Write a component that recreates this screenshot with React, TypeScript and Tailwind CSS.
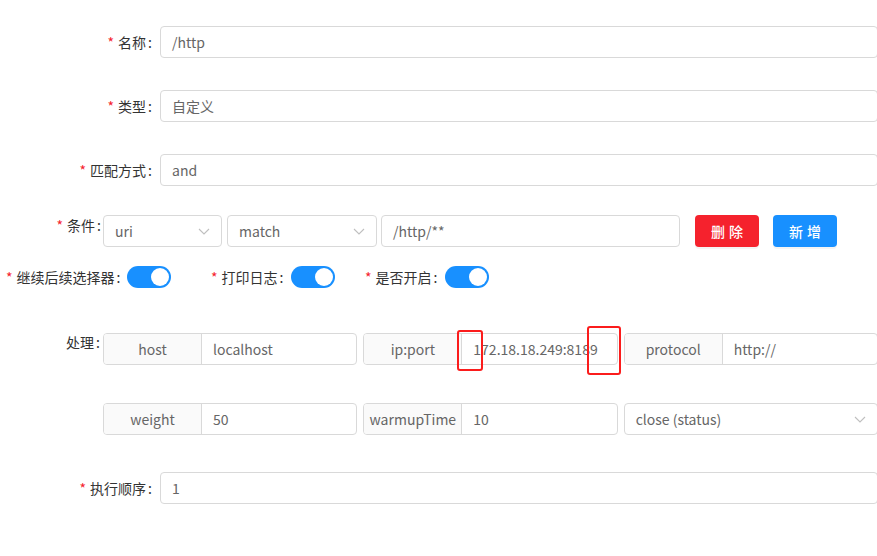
import React from 'react';

const FONT = { fontFamily: '"Noto Sans CJK SC", "Noto Sans", sans-serif' };

const Chevron = () => (
  <svg width="12" height="7" viewBox="0 0 12 7" fill="none" className="shrink-0">
    <path d="M1 1l5 5 5-5" stroke="#bfbfbf" strokeWidth="1.1" />
  </svg>
);

const Req = () => <span className="text-[#f5222d] mr-[4px]">*</span>;

const Label = ({ text, required = true, className = '' }: { text: string; required?: boolean; className?: string }) => (
  <div className={`shrink-0 text-right text-[14px] text-[#333] whitespace-nowrap ${className}`}>
    {required && <Req />}
    {text}
    <span className="ml-[2px]">:</span>
  </div>
);

const Input = ({ value, className = '' }: { value: string; className?: string }) => (
  <div className={`h-[32px] border border-[#d9d9d9] rounded-[4px] bg-white flex items-center px-[11px] text-[14px] text-[#666] ${className}`}>
    {value}
  </div>
);

const Select = ({ value, className = '' }: { value: string; className?: string }) => (
  <div className={`h-[32px] border border-[#d9d9d9] rounded-[4px] bg-white flex items-center justify-between pl-[11px] pr-[11px] text-[14px] text-[#666] ${className}`}>
    <span>{value}</span>
    <Chevron />
  </div>
);

const Group = ({ addon, value }: { addon: string; value: string }) => (
  <div className="h-[32px] flex border border-[#d9d9d9] rounded-[4px] bg-white text-[14px] text-[#666] overflow-hidden">
    <div className="w-[98px] shrink-0 bg-[#fafafa] border-r border-[#d9d9d9] flex items-center justify-center">{addon}</div>
    <div className="flex-1 flex items-center px-[11px] whitespace-nowrap overflow-hidden">{value}</div>
  </div>
);

const Switch = () => (
  <div className="w-[44px] h-[22px] rounded-full bg-[#1890ff] relative shrink-0">
    <div className="absolute right-[2px] top-[2px] w-[18px] h-[18px] rounded-full bg-white" />
  </div>
);

export default function App() {
  return (
    <div className="w-[877px] h-[556px] overflow-hidden bg-white relative" style={FONT}>
      <div className="w-[878px] flex flex-col">
        <div className="flex items-center mt-[26px]">
          <Label text="名称" className="w-[160px] pr-[8px]" />
          <Input value="/http" className="flex-1" />
        </div>
        <div className="flex items-center mt-[32px]">
          <Label text="类型" className="w-[160px] pr-[8px]" />
          <Input value="自定义" className="flex-1" />
        </div>
        <div className="flex items-center mt-[32px]">
          <Label text="匹配方式" className="w-[160px] pr-[8px]" />
          <Input value="and" className="flex-1" />
        </div>

        <div className="flex items-start mt-[29px]">
          <Label text="条件" className="w-[103px] pr-[2px] leading-[22px] -mt-[1px]" />
          <Select value="uri" className="w-[119px]" />
          <Select value="match" className="w-[150px] ml-[5px]" />
          <Input value="/http/**" className="w-[299px] ml-[4px]" />
          <button className="ml-[15px] w-[64px] h-[32px] rounded-[4px] bg-[#f5222d] text-white text-[14px] font-medium tracking-[4px] pl-[4px] shadow-[0_2px_0_rgba(0,0,0,0.045)]">删除</button>
          <button className="ml-[14px] w-[64px] h-[32px] rounded-[4px] bg-[#1890ff] text-white text-[14px] font-medium tracking-[4px] pl-[4px] shadow-[0_2px_0_rgba(0,0,0,0.045)]">新增</button>
        </div>

        <div className="flex items-center mt-[19px] h-[22px] text-[14px] text-[#333]">
          <div className="w-[127px] shrink-0 pl-[6px] whitespace-nowrap"><Req />继续后续选择器<span className="ml-[2px]">:</span></div>
          <Switch />
          <div className="w-[80px] shrink-0 ml-[40px] whitespace-nowrap"><Req />打印日志<span className="ml-[2px]">:</span></div>
          <Switch />
          <div className="w-[80px] shrink-0 ml-[30px] whitespace-nowrap"><Req />是否开启<span className="ml-[2px]">:</span></div>
          <Switch />
        </div>

        <div className="flex items-start mt-[45px]">
          <Label text="处理" required={false} className="w-[103px] pr-[3px] leading-[18px]" />
          <div className="flex-1 grid grid-cols-3 gap-x-[6px] gap-y-[38px]">
            <Group addon="host" value="localhost" />
            <Group addon="ip:port" value="172.18.18.249:8189" />
            <Group addon="protocol" value="http://" />
            <Group addon="weight" value="50" />
            <Group addon="warmupTime" value="10" />
            <Select value="close (status)" />
          </div>
        </div>

        <div className="flex items-center mt-[37px]">
          <Label text="执行顺序" className="w-[160px] pr-[8px]" />
          <Input value="1" className="flex-1" />
        </div>
      </div>

      <div className="absolute left-[457px] top-[330px] w-[26px] h-[41px] border-[2.5px] border-[#fb1c1c] rounded-[3px]" />
      <div className="absolute left-[587px] top-[326px] w-[34px] h-[49px] border-[2.5px] border-[#fb1c1c] rounded-[3px]" />
    </div>
  );
}
